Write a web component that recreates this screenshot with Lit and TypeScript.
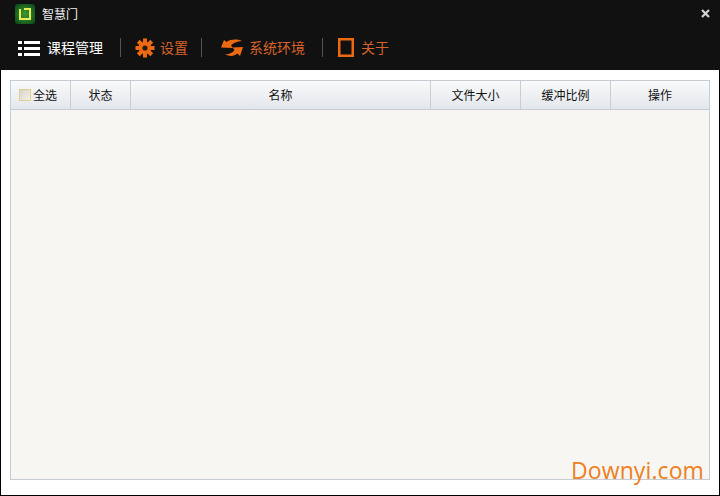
import { LitElement, html, css } from "lit";
import { customElement } from "lit/decorators.js";

@customElement("app-root")
export class AppRoot extends LitElement {
  static styles = css`
    :host { display: block; width: 720px; height: 496px; }
    .win {
      position: relative; box-sizing: border-box; width: 720px; height: 496px;
      background: #000; padding: 0 1px 1px 1px;
      display: flex; flex-direction: column;
      font-family: "Noto Sans CJK SC", "Liberation Sans", sans-serif;
      overflow: hidden;
    }
    .top { height: 70px; background: #111; margin: 0 -1px; display: flex; flex-direction: column; flex: none; }
    .title { height: 30px; display: flex; align-items: center; padding: 0 10px 2px 15px; gap: 7px; color: #f2f2f2; font-size: 12px; box-sizing: border-box; }
    .title .name { flex: 1; line-height: 28px; }
    .logo { display: block; }
    .close { display: block; margin-bottom: 2px; }
    .nav { display: flex; align-items: center; height: 35px; padding-left: 18px; font-size: 14px; color: #d8632a; }
    .item { display: flex; align-items: center; gap: 5px; white-space: nowrap; }
    .item span { display: block; line-height: 20px; padding-bottom: 1px; }
    .item svg { display: block; flex: none; }
    .item.on { color: #fff; gap: 7px; }
    .item.sync { gap: 6px; }
    .item.about { gap: 7px; }
    .sep { width: 1px; height: 19px; background: #555; flex: none; }
    .s1 { margin: 0 14px 0 17px; }
    .s2 { margin: 0 19px 0 13px; }
    .s3 { margin: 0 15px 0 17px; }
    .body { flex: 1; background: #fff; padding: 10px 9px 15px 9px; display: flex; min-height: 0; }
    .table { flex: 1; box-sizing: border-box; border: 1px solid #c6ccd4; background: #f7f6f2; display: flex; flex-direction: column; }
    .head {
      height: 29px; flex: none; box-sizing: border-box; border-bottom: 1px solid #c6ccd4;
      background: linear-gradient(#f9fafb, #e3e6eb);
      display: grid; grid-template-columns: 59px 60px 300px 90px 90px 1fr;
      font-size: 12px; color: #111;
    }
    .cell { display: flex; align-items: center; justify-content: center; border-left: 1px solid #c8ced6; line-height: 26px; padding-bottom: 1px; }
    .cell:first-child { border-left: 0; justify-content: flex-start; padding-left: 8px; gap: 2px; }
    .check { width: 10px; height: 10px; border: 1px solid #e2cf8c; background: linear-gradient(135deg, #d8d5ca, #f3f1e8); flex: none; }
    .mark {
      position: absolute; left: 571px; top: 455px; color: #ee7f22;
      font: 23px/30px "Open Sans", "Liberation Sans", sans-serif; letter-spacing: 0.1px;
    }
  `;

  render() {
    return html`
      <div class="win">
        <div class="top">
          <div class="title">
            <svg class="logo" width="20" height="20" viewBox="0 0 20 20">
              <defs><radialGradient id="lg" cx="50%" cy="50%" r="65%">
                <stop offset="0" stop-color="#3f9a2e" /><stop offset="1" stop-color="#0c4a1c" />
              </radialGradient></defs>
              <rect x="0" y="0" width="20" height="20" rx="3" fill="url(#lg)" />
              <path d="M5 5v10h4M5 15h10V5H9" fill="none" stroke="#e4ee5a" stroke-width="2" />
            </svg>
            <span class="name">智慧门</span>
            <svg class="close" width="9" height="9" viewBox="0 0 9 9">
              <path d="M1 1l7 7M8 1l-7 7" stroke="#d4d4d4" stroke-width="2.2" />
            </svg>
          </div>
          <div class="nav">
            <div class="item on">
              <svg width="22" height="16" viewBox="0 0 22 16" fill="#fff">
                <rect x="0" y="1" width="4" height="3" /><rect x="6" y="1" width="16" height="3" />
                <rect x="0" y="7" width="4" height="3" /><rect x="6" y="7" width="16" height="3" />
                <rect x="0" y="13" width="4" height="3" /><rect x="6" y="13" width="16" height="3" />
              </svg>
              <span>课程管理</span>
            </div>
            <div class="sep s1"></div>
            <div class="item">
              <svg width="20" height="20" viewBox="0 0 20 20">
                <g fill="#ee6a12">
                  <rect x="8" y="0.5" width="4" height="19" />
                  <rect x="8" y="0.5" width="4" height="19" transform="rotate(45 10 10)" />
                  <rect x="8" y="0.5" width="4" height="19" transform="rotate(90 10 10)" />
                  <rect x="8" y="0.5" width="4" height="19" transform="rotate(135 10 10)" />
                  <circle cx="10" cy="10" r="6.2" />
                </g>
                <circle cx="10" cy="10" r="2.6" fill="#2a1a10" />
              </svg>
              <span>设置</span>
            </div>
            <div class="sep s2"></div>
            <div class="item sync">
              <svg width="22" height="18" viewBox="0 0 22 18" fill="#ee6a12">
                <path d="M0 8.5 L3 1 L5.5 3 C10 0 16 0 21 2 C16 2.5 12 4 10 6.5 L12 9 Z" />
                <path d="M22 8 L19 17 L16.5 14.5 C13 17.5 9 17.5 4 15.5 C9 15 12 13.5 13.5 11 L11.5 8.5 Z" />
              </svg>
              <span>系统环境</span>
            </div>
            <div class="sep s3"></div>
            <div class="item about">
              <svg width="16" height="19" viewBox="0 0 16 19">
                <rect x="1.25" y="1.25" width="13.5" height="16.5" fill="none" stroke="#ee6a12" stroke-width="2.5" />
              </svg>
              <span>关于</span>
            </div>
          </div>
        </div>
        <div class="body">
          <div class="table">
            <div class="head">
              <div class="cell"><span class="check"></span><span>全选</span></div>
              <div class="cell">状态</div>
              <div class="cell">名称</div>
              <div class="cell">文件大小</div>
              <div class="cell">缓冲比例</div>
              <div class="cell">操作</div>
            </div>
          </div>
        </div>
        <div class="mark">Downyi.com</div>
      </div>
    `;
  }
}
